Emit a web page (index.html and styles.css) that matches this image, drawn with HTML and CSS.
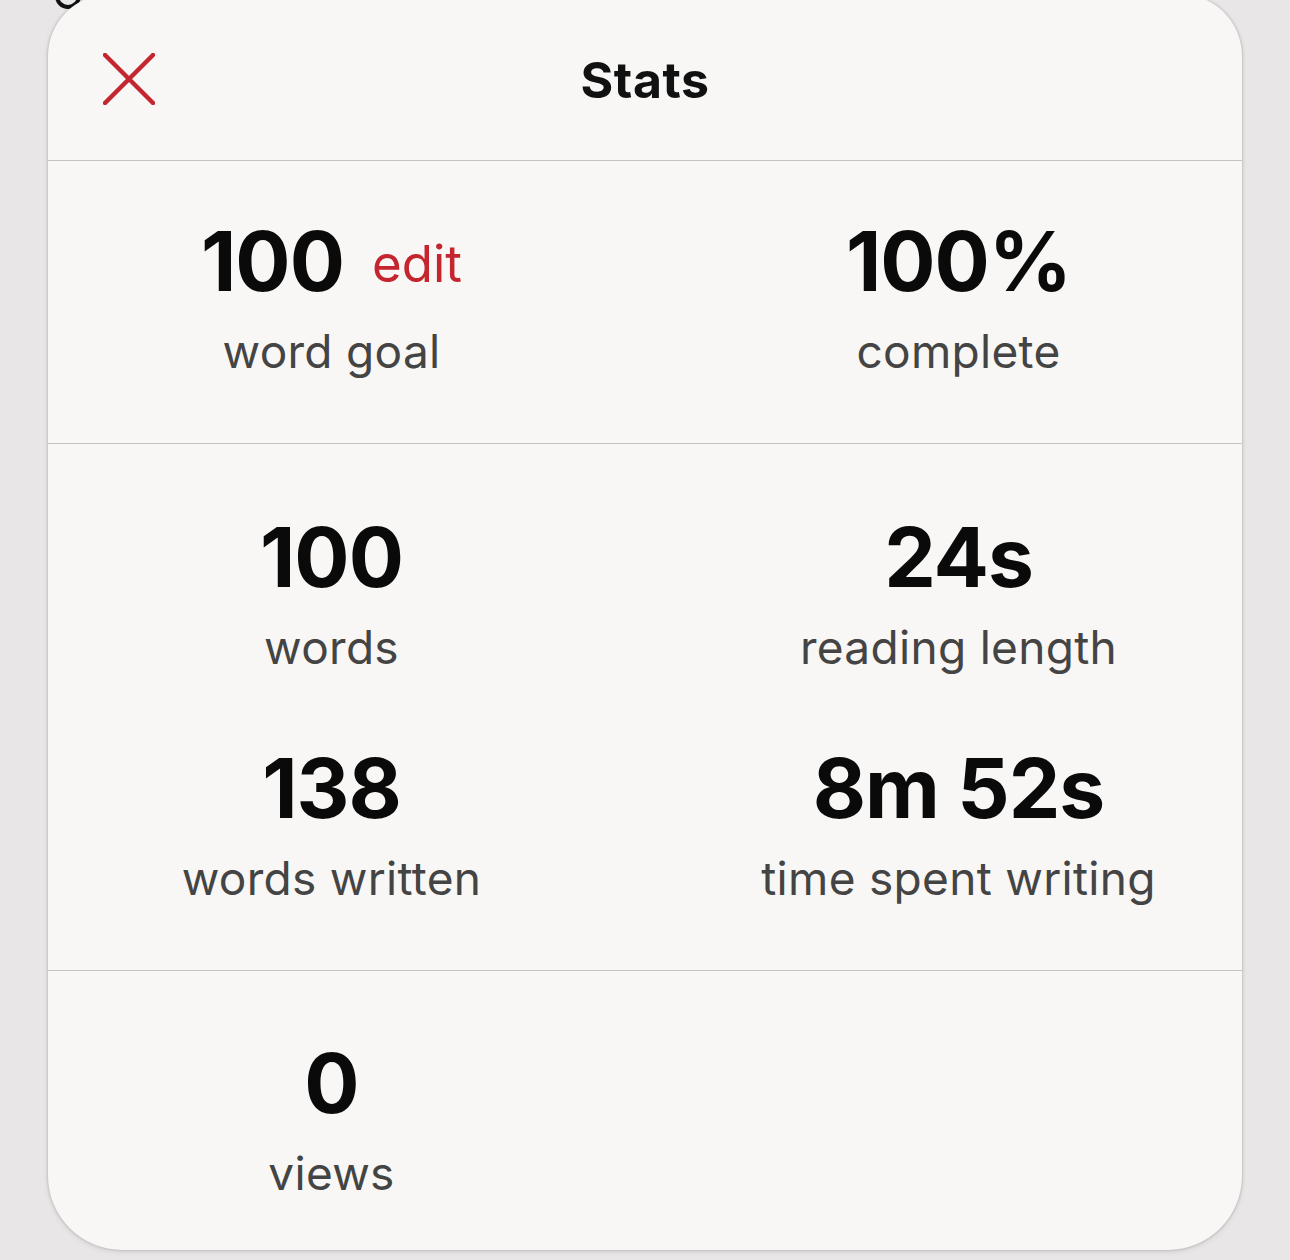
FILE: index.html
```html
<!DOCTYPE html>
<html>
<head>
    <meta charset="utf-8">
    <meta name="viewport" content="width=device-width, initial-scale=1">
    <link rel="stylesheet" href="styles.css">
</head>
<body>
    <!-- bit of the page behind the sheet -->
    <svg class="behind" width="40" height="20" viewBox="0 0 40 20">
        <circle cx="14" cy="-4" r="11" fill="none" stroke="#111" stroke-width="4"/>
    </svg>

    <div class="sheet">

        <div class="sheetHeader">
            <button class="closeBtn" aria-label="close">
                <svg width="52" height="52" viewBox="0 0 52 52">
                    <path d="M2 2 L50 50 M50 2 L2 50" stroke="#c4262f" stroke-width="4.5" stroke-linecap="round" fill="none"/>
                </svg>
            </button>
            <div class="sheetTitle">Stats</div>
        </div>

        <!-- goal -->
        <div class="statSection goalSection">
            <div class="stat">
                <div class="statRow">
                    <span class="statValue">100</span>
                    <span class="editLink">edit</span>
                </div>
                <div class="statLabel">word goal</div>
            </div>
            <div class="stat">
                <div class="statValue">100%</div>
                <div class="statLabel">complete</div>
            </div>
        </div>

        <!-- counts -->
        <div class="statSection">
            <div class="stat">
                <div class="statValue">100</div>
                <div class="statLabel">words</div>
            </div>
            <div class="stat">
                <div class="statValue">24s</div>
                <div class="statLabel">reading length</div>
            </div>
            <div class="stat">
                <div class="statValue">138</div>
                <div class="statLabel">words written</div>
            </div>
            <div class="stat">
                <div class="statValue">8m 52s</div>
                <div class="statLabel">time spent writing</div>
            </div>
        </div>

        <!-- views -->
        <div class="statSection lastSection">
            <div class="stat">
                <div class="statValue">0</div>
                <div class="statLabel">views</div>
            </div>
        </div>

    </div>
</body>
</html>
```

FILE: styles.css
```css
html, body {
    margin: 0;
    padding: 0;
}

body {
    width: 1290px;
    height: 1260px;
    overflow: hidden;
    background-color: #e8e6e7;
    font-family: Inter, "Noto Sans", sans-serif;
    position: relative;
}

.behind {
    position: absolute;
    left: 54px;
    top: 0px;
}

.sheet {
    position: relative;
    top: -6px;
    margin: 0 48px;
    height: 1256px;
    box-sizing: border-box;
    background-color: #f8f7f5;
    border-radius: 62px 62px 74px 74px;
    box-shadow: 0 0 3px rgba(0,0,0,0.25), 0 2px 6px rgba(0,0,0,0.08);
    display: flex;
    flex-direction: column;
    overflow: hidden;
}

.sheetHeader {
    flex-shrink: 0;
    height: 167px;
    box-sizing: border-box;
    border-bottom: 1.5px solid #c6c4c2;
    display: flex;
    align-items: center;
    justify-content: center;
    position: relative;
}

.sheetTitle {
    font-size: 50px;
    font-weight: 700;
    color: #111;
    margin-top: 6px;
    letter-spacing: 0.5px;
}

.closeBtn {
    position: absolute;
    left: 55px;
    top: 59px;
    padding: 0;
    border: none;
    background: none;
    line-height: 0;
}

.statSection {
    flex-shrink: 0;
    display: grid;
    grid-template-columns: 567px 567px;
    column-gap: 60px;
    row-gap: 73px;
    padding: 73px 0 63px 0;
    border-bottom: 1.5px solid #c6c4c2;
}

.goalSection {
    padding: 60px 0 64px 0;
}

.lastSection {
    border-bottom: none;
    padding-top: 72px;
}

.stat {
    display: flex;
    flex-direction: column;
    align-items: center;
    gap: 21px;
}

.statRow {
    display: flex;
    align-items: center;
}

.statValue {
    font-size: 82px;
    font-weight: 700;
    line-height: 1;
    color: #0a0a0a;
    letter-spacing: -1px;
}

.editLink {
    font-size: 51px;
    line-height: 1.2;
    color: #c4252f;
    margin-left: 28px;
    margin-top: 4px;
}

.statLabel {
    font-size: 46px;
    line-height: 1.2;
    color: #444;
    letter-spacing: 0.3px;
}
```
